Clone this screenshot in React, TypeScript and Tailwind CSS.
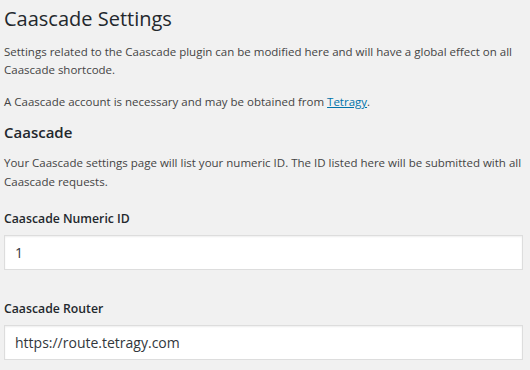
export default function App() {
  return (
    <div className="min-h-[370px] w-[530px] bg-[#f1f1f1] font-['Open_Sans',sans-serif] text-[11.5px] text-[#444]">
      <div className="w-[523px] pl-1 pt-[5px]">
        <h1 className="text-[20px] leading-[28px] font-normal text-[#23282d]">Caascade Settings</h1>

        <p className="mt-[10px] leading-[18px]">
          Settings related to the Caascade plugin can be modified here and will have a global effect on all
          Caascade shortcode.
        </p>
        <p className="mt-[14px] leading-[18px]">
          A Caascade account is necessary and may be obtained from{" "}
          <a href="#" className="text-[#0073aa] underline">
            Tetragy
          </a>
          .
        </p>

        <h2 className="mt-[11px] text-[15px] leading-[20px] font-semibold text-[#23282d]">Caascade</h2>
        <p className="mt-[12px] leading-[18.5px]">
          Your Caascade settings page will list your numeric ID. The ID listed here will be submitted with all
          Caascade requests.
        </p>

        <div className="mt-[18.5px] flex flex-col gap-[7.5px]">
          <label className="text-[12.25px] leading-[18px] font-semibold text-[#23282d]">Caascade Numeric ID</label>
          <input
            defaultValue="1"
            className="h-[35px] w-full border border-[#ddd] bg-white px-[10px] text-[14px] text-[#32373c] shadow-[inset_0_1px_2px_rgba(0,0,0,0.07)] outline-none"
          />
        </div>

        <div className="mt-[30px] flex flex-col gap-[7px]">
          <label className="text-[12.25px] leading-[18px] font-semibold text-[#23282d]">Caascade Router</label>
          <input
            defaultValue="https://route.tetragy.com"
            className="h-[35px] w-full border border-[#ddd] bg-white px-[10px] text-[14px] text-[#32373c] shadow-[inset_0_1px_2px_rgba(0,0,0,0.07)] outline-none"
          />
        </div>
      </div>
    </div>
  );
}
